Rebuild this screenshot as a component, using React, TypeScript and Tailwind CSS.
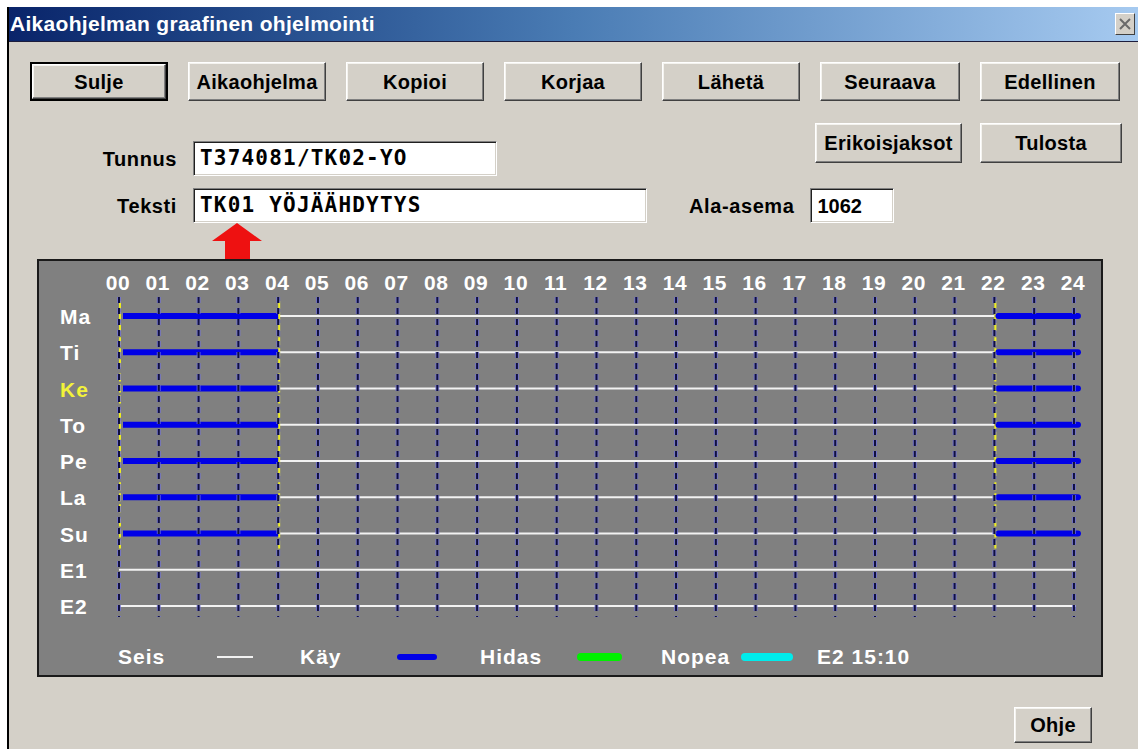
import React from "react";

const HOURS = Array.from({ length: 25 }, (_, i) => i);
const ROWS = ["Ma", "Ti", "Ke", "To", "Pe", "La", "Su", "E1", "E2"];

// Chart geometry (in chart-local px)
const X0 = 80;
const STEP = 39.79;
const hx = (h: number) => X0 + STEP * h;
const ry = (i: number) => 55 + 36.25 * i;

function Btn({
  label,
  cls,
  isDefault,
}: {
  label: string;
  cls: string;
  isDefault?: boolean;
}) {
  const face = (
    <div className="flex h-full w-full items-center justify-center border border-t-white border-l-white border-r-[#404040] border-b-[#404040] bg-[#d4d0c8] shadow-[inset_-1px_-1px_0_#808080,inset_1px_1px_0_#f4f3ef]">
      <span className="font-['Liberation_Sans',Arial,sans-serif] text-[20px] font-bold tracking-[0.3px] text-black">
        {label}
      </span>
    </div>
  );
  if (isDefault) {
    return <div className={`${cls} border-2 border-black`}>{face}</div>;
  }
  return <div className={cls}>{face}</div>;
}

function Field({ value, cls, mono }: { value: string; cls: string; mono?: boolean }) {
  return (
    <div
      className={`${cls} flex items-center border border-t-[#808080] border-l-[#808080] border-r-white border-b-white bg-white pl-[6px] shadow-[inset_1px_1px_0_#202020,inset_-1px_-1px_0_#d4d0c8]`}
    >
      {mono ? (
        <span className="font-['DejaVu_Sans_Mono',monospace] text-[21px] font-bold tracking-[1.2px] text-black">
          {value}
        </span>
      ) : (
        <span className="font-['Liberation_Sans',Arial,sans-serif] text-[20px] font-bold text-black">
          {value}
        </span>
      )}
    </div>
  );
}

function Label({ text, cls }: { text: string; cls: string }) {
  return (
    <div
      className={`${cls} font-['Liberation_Sans',Arial,sans-serif] text-[20px] font-bold tracking-[0.6px] text-black`}
    >
      {text}
    </div>
  );
}

function Chart() {
  const dayRows = ROWS.slice(0, 7);
  return (
    <svg width={1062} height={370} className="block">
      {/* hour labels */}
      {HOURS.map((h) => (
        <text
          key={`h${h}`}
          x={hx(h) - 1}
          y={29}
          textAnchor="middle"
          fill="#ffffff"
          fontFamily="'Liberation Sans', Arial, sans-serif"
          fontWeight="bold"
          fontSize={21}
          letterSpacing={0.6}
        >
          {String(h).padStart(2, "0")}
        </text>
      ))}
      {/* row labels */}
      {ROWS.map((r, i) => (
        <text
          key={`r${r}`}
          x={21}
          y={ry(i) + 8}
          fill={r === "Ke" ? "#f2f23a" : "#ffffff"}
          fontFamily="'Liberation Sans', Arial, sans-serif"
          fontWeight="bold"
          fontSize={21}
          letterSpacing={1}
        >
          {r}
        </text>
      ))}
      {/* stopped periods */}
      {dayRows.map((_, i) => (
        <line key={`w${i}`} x1={hx(4)} x2={hx(22)} y1={ry(i)} y2={ry(i)} stroke="#f2f2f2" strokeWidth={2} />
      ))}
      {[7, 8].map((i) => (
        <line key={`we${i}`} x1={hx(0)} x2={hx(24) + 2} y1={ry(i)} y2={ry(i)} stroke="#f2f2f2" strokeWidth={2} />
      ))}
      {/* switch markers */}
      {dayRows.map((_, i) =>
        [0, 4, 22].map((h) => (
          <line
            key={`y${i}-${h}`}
            x1={hx(h) + 1}
            x2={hx(h) + 1}
            y1={ry(i) - 15}
            y2={ry(i) + 15}
            stroke="#eeee20"
            strokeWidth={2}
            strokeDasharray="8 3"
          />
        ))
      )}
      {/* running periods */}
      {dayRows.map((_, i) => (
        <g key={`b${i}`}>
          <line x1={hx(0) + 4} x2={hx(4)} y1={ry(i)} y2={ry(i)} stroke="#0000e6" strokeWidth={6} />
          <line
            x1={hx(22) + 4}
            x2={hx(24) + 4}
            y1={ry(i)}
            y2={ry(i)}
            stroke="#0000e6"
            strokeWidth={6}
            strokeLinecap="round"
          />
        </g>
      ))}
      {/* hour grid */}
      {HOURS.map((h) => (
        <g key={`g${h}`}>
          <line
            x1={hx(h)}
            x2={hx(h)}
            y1={36}
            y2={356}
            stroke="#7070dc"
            strokeOpacity={0.75}
            strokeWidth={4}
            strokeDasharray="6 5"
          />
          <line
            x1={hx(h)}
            x2={hx(h)}
            y1={36}
            y2={356}
            stroke="#101040"
            strokeWidth={2}
            strokeDasharray="6 5"
          />
        </g>
      ))}
    </svg>
  );
}

function Legend() {
  const txt = "font-['Liberation_Sans',Arial,sans-serif] text-[21px] font-bold tracking-[1px] text-white";
  return (
    <div className="mt-[14px] flex h-[24px] items-center pl-[79px]">
      <span className={`${txt} w-[99px]`}>Seis</span>
      <div className="mr-[47px] h-[2px] w-[36px] bg-[#f2f2f2]" />
      <span className={`${txt} w-[97px]`}>Käy</span>
      <div className="mr-[43px] h-[6px] w-[40px] rounded-full bg-[#0000e6]" />
      <span className={`${txt} w-[97px]`}>Hidas</span>
      <div className="mr-[39px] h-[8px] w-[45px] rounded-full bg-[#00f000]" />
      <span className={`${txt} w-[80px]`}>Nopea</span>
      <div className="mr-[24px] h-[8px] w-[52px] rounded-full bg-[#00ecec]" />
      <span className={txt}>E2 15:10</span>
    </div>
  );
}

export default function App() {
  return (
    <div className="h-[749px] w-[1138px] overflow-hidden bg-white pl-[7px] pt-[7px]">
      <div className="flex h-[742px] flex-col border-l-2 border-black bg-[#d4d0c8]">
        {/* title bar */}
        <div className="flex h-[35px] shrink-0 items-center justify-between border-b border-[#1c1c3c] bg-linear-to-r from-[#0a246a] via-[#4a7cb4] to-[#a6caf0] pl-[1px] pr-[3px]">
          <span className="font-['Liberation_Sans',Arial,sans-serif] text-[21px] font-bold tracking-[0.3px] text-white">
            Aikaohjelman graafinen ohjelmointi
          </span>
          <div className="flex h-[22px] w-[20px] items-center justify-center border border-t-white border-l-white border-r-[#404040] border-b-[#404040] bg-[#d4d0c8]">
            <svg width="12" height="12" viewBox="0 0 12 12">
              <path d="M1 1 L11 11 M11 1 L1 11" stroke="#6a6a6a" strokeWidth="2" />
            </svg>
          </div>
        </div>

        {/* command buttons */}
        <div className="mt-[20px] flex gap-[20px] pl-[21px]">
          <Btn label="Sulje" cls="h-[39px] w-[138px]" isDefault />
          <Btn label="Aikaohjelma" cls="h-[39px] w-[138px]" />
          <Btn label="Kopioi" cls="h-[39px] w-[138px]" />
          <Btn label="Korjaa" cls="h-[39px] w-[138px]" />
          <Btn label="Lähetä" cls="h-[39px] w-[138px]" />
          <Btn label="Seuraava" cls="h-[39px] w-[140px]" />
          <Btn label="Edellinen" cls="h-[39px] w-[140px]" />
        </div>

        {/* identifier row */}
        <div className="mt-[22px] flex items-start">
          <div className="mt-[18px] flex items-center">
            <Label text="Tunnus" cls="w-[168px] text-right" />
            <Field value="T374081/TK02-YO" cls="ml-[16px] h-[35px] w-[304px]" mono />
          </div>
          <div className="ml-auto flex gap-[18px] pr-[16px]">
            <Btn label="Erikoisjaksot" cls="h-[40px] w-[147px]" />
            <Btn label="Tulosta" cls="h-[40px] w-[142px]" />
          </div>
        </div>

        {/* text row */}
        <div className="mt-[12px] flex items-center">
          <Label text="Teksti" cls="w-[168px] text-right" />
          <Field value="TK01 YÖJÄÄHDYTYS" cls="ml-[16px] h-[35px] w-[454px]" mono />
          <Label text="Ala-asema" cls="ml-[42px]" />
          <Field value="1062" cls="ml-[16px] h-[35px] w-[84px]" />
        </div>

        {/* pointer */}
        <div className="h-[36px] pl-[203px]">
          <svg width="50" height="36" viewBox="0 0 50 36">
            <polygon points="25,0 50,18 38,18 38,36 13,36 13,18 0,18" fill="#ee1111" />
          </svg>
        </div>

        {/* schedule chart */}
        <div className="ml-[28px] h-[418px] w-[1066px] shrink-0 border-2 border-[#1a1a1a] bg-[#808080]">
          <Chart />
          <Legend />
        </div>

        {/* help */}
        <div className="mt-[30px] flex justify-end pr-[46px]">
          <Btn label="Ohje" cls="h-[36px] w-[78px]" />
        </div>
      </div>
    </div>
  );
}
